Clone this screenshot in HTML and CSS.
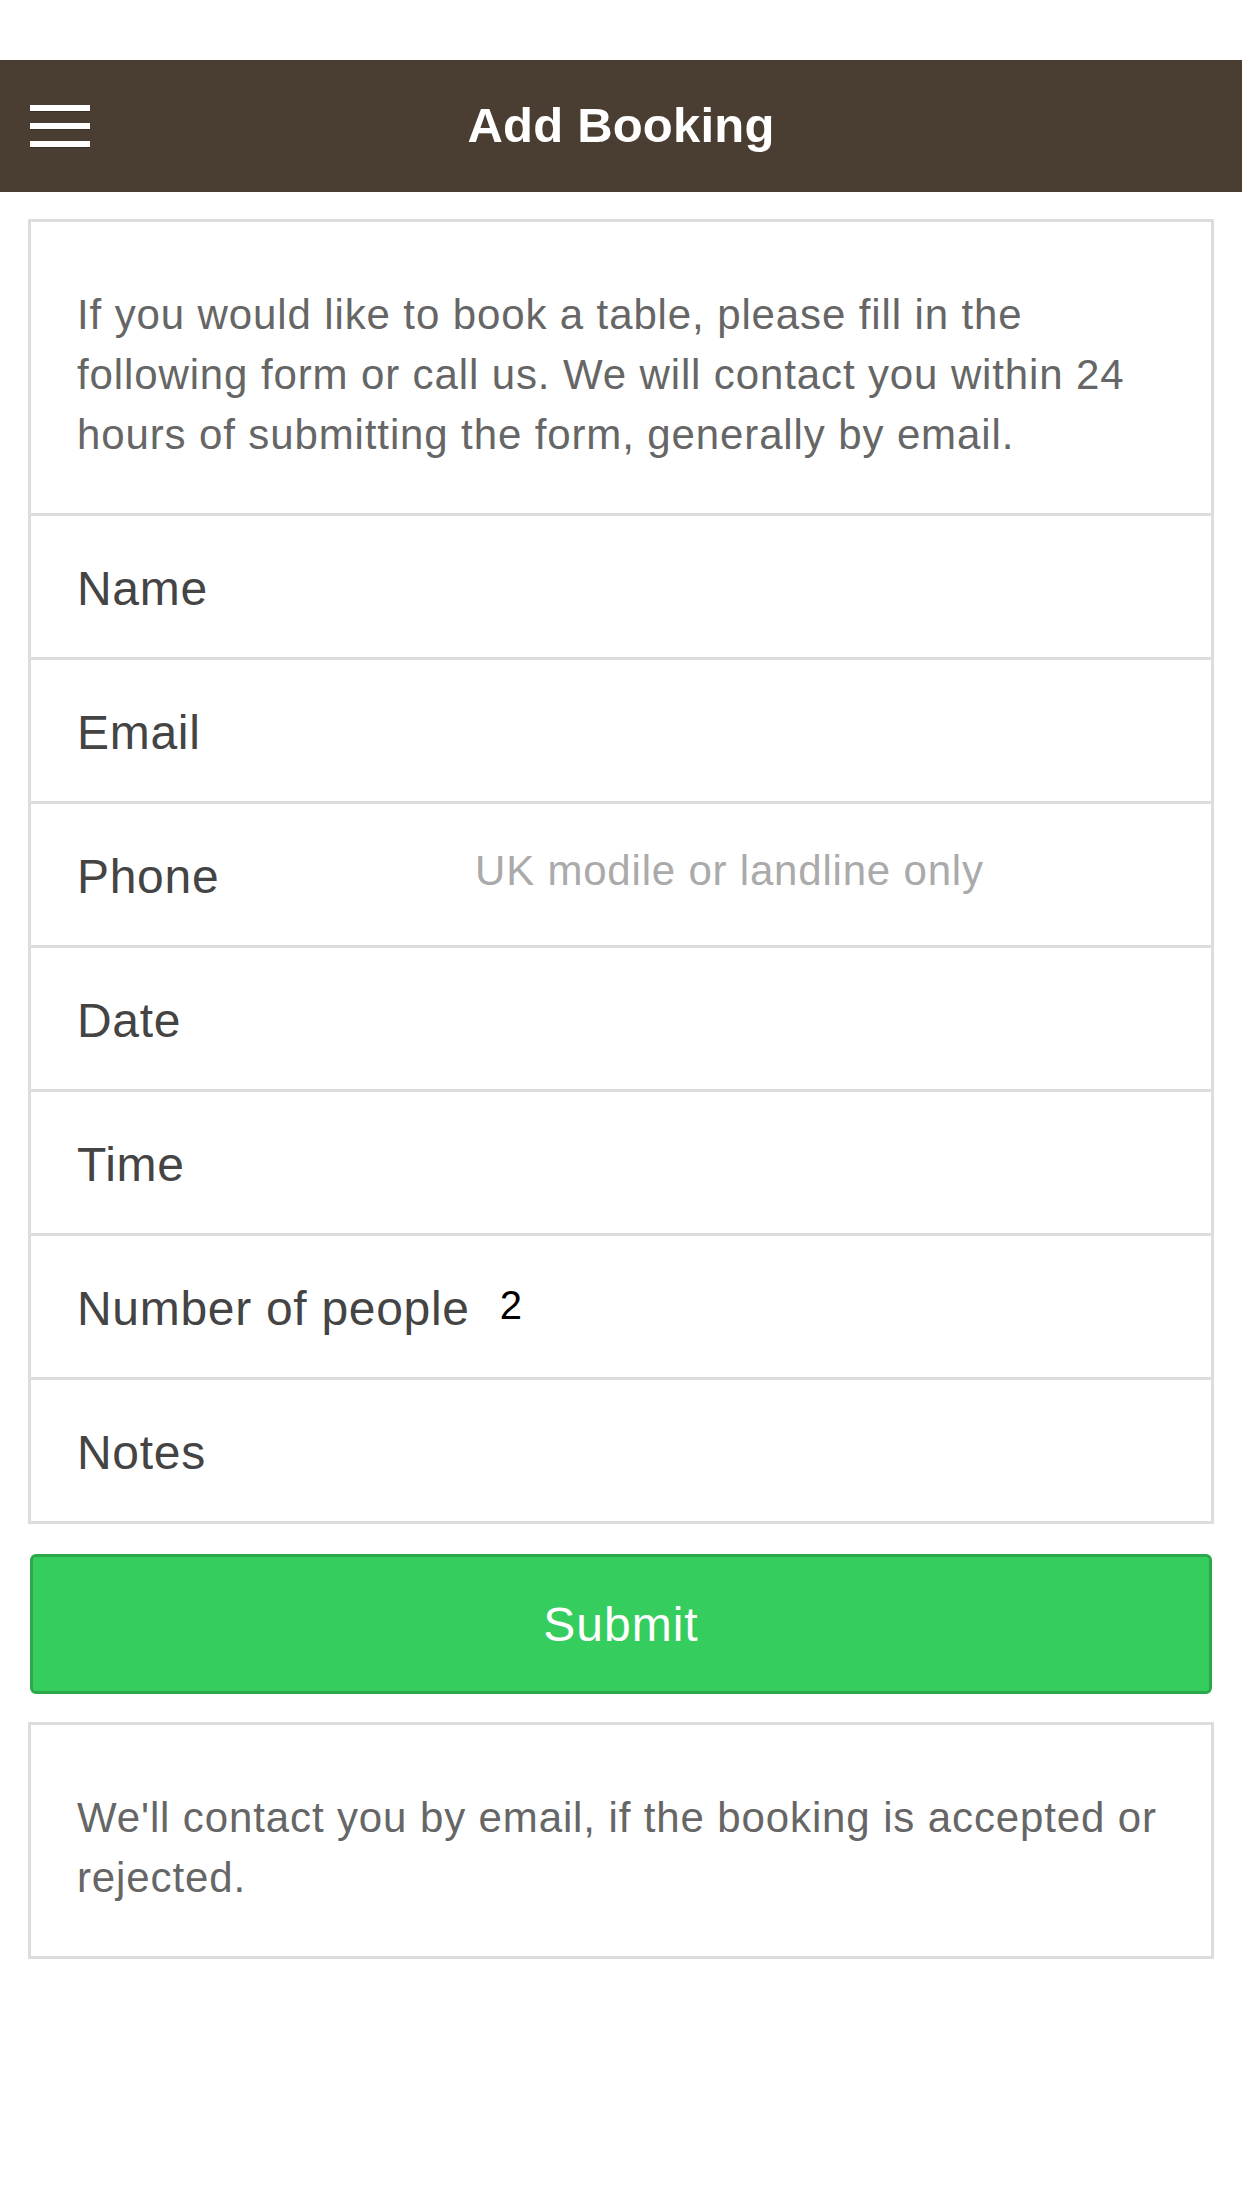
FILE: index.html
```html
<!DOCTYPE html>
<html lang="en">
<head>
<meta charset="utf-8">
<title>Add Booking</title>
<link rel="stylesheet" href="styles.css">
</head>
<body>
<div class="status-bar"></div>
<header class="app-header">
  <button class="menu-btn" type="button" aria-label="Menu">
    <span class="menu-bar"></span>
    <span class="menu-bar"></span>
    <span class="menu-bar"></span>
  </button>
  <h1 class="app-title">Add Booking</h1>
  <div class="header-spacer"></div>
</header>
<main class="content">
  <form class="card booking-form">
    <p class="card-text">If you would like to book a table, please fill in the following form or call us. We will contact you within 24 hours of submitting the form, generally by email.</p>
    <label class="field"><span class="field-label">Name</span><input class="field-input" type="text"></label>
    <label class="field"><span class="field-label">Email</span><input class="field-input" type="text"></label>
    <label class="field"><span class="field-label">Phone</span><input class="field-input field-input--hint" type="text" placeholder="UK modile or landline only"></label>
    <label class="field"><span class="field-label">Date</span><input class="field-input" type="text"></label>
    <label class="field"><span class="field-label">Time</span><input class="field-input" type="text"></label>
    <label class="field"><span class="field-label">Number of people</span><input class="field-input field-input--value" type="text" value="2"></label>
    <label class="field"><span class="field-label">Notes</span><input class="field-input" type="text"></label>
  </form>
  <button class="submit-btn" type="button">Submit</button>
  <div class="card">
    <p class="card-text">We'll contact you by email, if the booking is accepted or rejected.</p>
  </div>
</main>
</body>
</html>
```
FILE: styles.css
```css
* {
  box-sizing: border-box;
}

html, body {
  margin: 0;
  padding: 0;
  background: #ffffff;
}

body {
  font-family: "Liberation Sans", Arial, Helvetica, sans-serif;
  color: #444444;
}

.status-bar {
  height: 60px;
  background: #ffffff;
}

.app-header {
  height: 132px;
  background: #4a3e33;
  display: grid;
  grid-template-columns: 1fr auto 1fr;
  align-items: center;
}

.menu-btn {
  justify-self: start;
  margin-left: 30px;
  padding: 0;
  border: 0;
  background: transparent;
  display: flex;
  flex-direction: column;
  gap: 12px;
  cursor: pointer;
}

.menu-bar {
  display: block;
  width: 60px;
  height: 6px;
  background: #ffffff;
  box-shadow: 0 1px 0 rgba(0, 0, 0, 0.25);
}

.app-title {
  margin: 0;
  color: #ffffff;
  font-size: 49px;
  font-weight: 700;
  line-height: 1.1;
  letter-spacing: 0.2px;
}

.content {
  padding: 27px 28px 0;
}

.card {
  border: 3px solid #dddddd;
  background: #ffffff;
}

.card + .submit-btn {
  margin-top: 30px;
}

.submit-btn + .card {
  margin-top: 28px;
}

.card-text {
  margin: 0;
  padding: 63px 24px 48px 46px;
  font-size: 42px;
  line-height: 60px;
  letter-spacing: 0.88px;
  color: #666666;
}

.field {
  display: flex;
  align-items: center;
  height: 144px;
  padding-left: 46px;
  border-top: 3px solid #dddddd;
}

.field-label {
  flex: none;
  min-width: 368px;
  padding-top: 5px;
  font-size: 48px;
  line-height: 1.15;
  letter-spacing: 0.7px;
  color: #444444;
}

.field-input {
  flex: 1;
  min-width: 0;
  height: 56px;
  margin: 0 0 0 30px;
  padding: 0;
  border: 0;
  outline: none;
  background: transparent;
  font-family: inherit;
  font-size: 42px;
  letter-spacing: 0.8px;
  color: #000000;
}

.field-input--hint {
  margin-bottom: 8px;
}

.field-input::placeholder {
  color: #aaaaaa;
  opacity: 1;
}

.field-input--value {
  font-size: 40px;
  letter-spacing: 0;
  margin-bottom: 3px;
}

.submit-btn {
  display: block;
  width: calc(100% - 4px);
  height: 140px;
  margin-left: 2px;
  padding: 0;
  border: 3px solid #2aa84a;
  border-radius: 6px;
  background: #36cd5f;
  color: #ffffff;
  font-family: inherit;
  font-size: 48px;
  letter-spacing: 1px;
  cursor: pointer;
}
```
